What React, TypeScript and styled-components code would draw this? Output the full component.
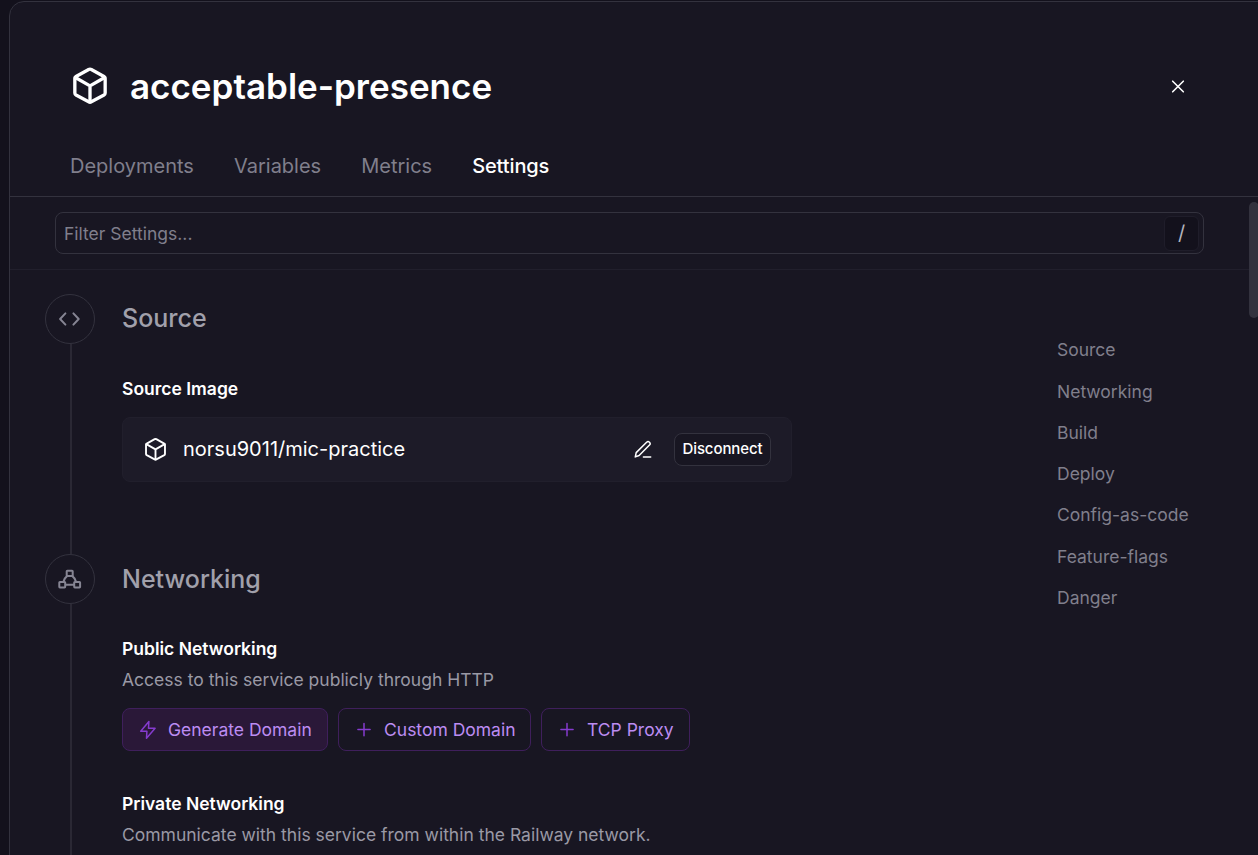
import React from "react";
import styled, { createGlobalStyle } from "styled-components";

const GlobalStyle = createGlobalStyle`
  * { box-sizing: border-box; }
  html, body { margin: 0; background: #13111c; overflow: hidden; }
  body { font-family: Inter, "Liberation Sans", sans-serif; }
  h1, h2, h3, p { margin: 0; }
  button, input { font-family: inherit; }
  svg { display: block; flex: none; }
`;

const Screen = styled.div`
  height: 855px;
  padding: 1px 0 0 9px;
  overflow: hidden;
`;

const Panel = styled.main`
  display: flex;
  flex-direction: column;
  width: 1270px;
  height: 880px;
  background: #181622;
  border: 1px solid #33323e;
  border-radius: 15px;
`;

const Header = styled.header`
  flex: none;
  width: 1248px;
  height: 195px;
  padding: 59px 60px 0;
  border-bottom: 1px solid #33323e;
`;

const TitleRow = styled.div`
  display: flex;
  align-items: center;
  height: 50px;
  padding-right: 13px;
  color: #fff;
`;

const Title = styled.h1`
  flex: 1;
  margin-left: 20px;
  font-size: 35px;
  font-weight: 600;
  line-height: 50px;
`;

const CloseButton = styled.button`
  display: grid;
  place-items: center;
  width: 14px;
  height: 14px;
  padding: 0;
  border: 0;
  background: none;
  color: #fff;
`;

const Tabs = styled.nav`
  display: flex;
  gap: 40px;
  margin-top: 40px;
`;

const Tab = styled.a<{ $active?: boolean }>`
  color: ${(p) => (p.$active ? "#fff" : "#807f8c")};
  font-size: 20px;
  font-weight: ${(p) => (p.$active ? 500 : 400)};
  letter-spacing: ${(p) => (p.$active ? "-0.1px" : "0")};
  line-height: 30px;
  white-space: nowrap;
`;

const FilterBar = styled.div`
  width: 1239px;
  height: 73px;
  padding: 15px 45px 0;
  border-bottom: 1px solid #211f2c;
`;

const FilterField = styled.label`
  display: flex;
  align-items: center;
  height: 42px;
  padding: 0 4px 0 8px;
  border: 1px solid #33323e;
  border-radius: 8px;
`;

const FilterInput = styled.input`
  flex: 1;
  padding: 0;
  border: 0;
  outline: 0;
  background: none;
  color: #fff;
  font-size: 17.5px;
  &::placeholder { color: #807f8c; opacity: 1; }
`;

const Key = styled.kbd`
  display: grid;
  place-items: center;
  width: 35px;
  height: 35px;
  border: 1px solid #1f1d2a;
  border-radius: 6px;
  background: #13111c;
  color: #b4b3bd;
  font-family: inherit;
  font-size: 20px;
`;

const Viewport = styled.div`
  position: relative;
  flex: 1;
`;

const ScrollThumb = styled.div`
  position: absolute;
  top: 5px;
  left: 1239px;
  width: 10px;
  height: 116px;
  border-radius: 5px;
  background: #33323e;
`;

const Content = styled.div`
  display: flex;
  padding: 24px 0 0 35px;
`;

const Sections = styled.div`
  width: 1012px;
`;

const Section = styled.section<{ $height: number }>`
  display: flex;
  gap: 27px;
  height: ${(p) => p.$height}px;
`;

const Rail = styled.div`
  display: flex;
  flex-direction: column;
  align-items: center;
  width: 50px;
`;

const RailIcon = styled.div`
  display: grid;
  place-items: center;
  flex: none;
  width: 50px;
  height: 50px;
  border: 1px solid #33323e;
  border-radius: 50%;
  color: #868593;
`;

const RailLine = styled.div`
  flex: 1;
  width: 2px;
  margin-left: 2px;
  background: #2a2834;
`;

const SectionBody = styled.div`
  width: 670px;
`;

const SectionTitle = styled.h2<{ $height?: number }>`
  height: 50px;
  color: #a1a0ab;
  font-size: 25px;
  font-weight: 500;
  line-height: ${(p) => p.$height ?? 50}px;
`;

const Group = styled.div<{ $top: number }>`
  margin-top: ${(p) => p.$top}px;
`;

const GroupTitle = styled.h3`
  color: #fff;
  font-size: 17.5px;
  font-weight: 600;
  line-height: 30px;
`;

const GroupText = styled.p`
  color: #9a99a5;
  font-size: 17.5px;
  line-height: 30px;
  margin-top: 1px;
  white-space: nowrap;
`;

const SourceCard = styled.div`
  display: flex;
  align-items: center;
  height: 65px;
  margin-top: 13px;
  padding: 0 20px;
  border: 1px solid #211f2c;
  border-radius: 8px;
  background: #1d1b28;
  color: #fff;
`;

const SourceName = styled.span`
  flex: 1;
  margin-left: 15px;
  padding-bottom: 2px;
  font-size: 20px;
  line-height: 30px;
`;

const SmallButton = styled.button`
  width: 97px;
  height: 33px;
  margin-left: 21px;
  padding: 0 0 2px;
  border: 1px solid #33323e;
  border-radius: 8px;
  background: #181622;
  color: #fff;
  font-size: 15px;
  font-weight: 500;
  letter-spacing: -0.1px;
  white-space: nowrap;
`;

const Actions = styled.div`
  display: flex;
  gap: 10px;
  margin-top: 13px;
`;

const ActionButton = styled.button<{ $width: number; $filled?: boolean }>`
  display: flex;
  align-items: center;
  gap: 10px;
  width: ${(p) => p.$width}px;
  height: 43px;
  padding: 0 0 0 15px;
  border: 1px solid #3f1f5c;
  border-radius: 8px;
  background: ${(p) => (p.$filled ? "#2a1838" : "transparent")};
  color: #bc8cf2;
  font-size: 17.5px;
  white-space: nowrap;
  svg { color: #853bce; }
`;

const Outline = styled.nav`
  display: flex;
  flex-direction: column;
  gap: 11.3px;
  padding-top: 41.3px;
`;

const OutlineLink = styled.a`
  color: #807f8c;
  font-size: 17.5px;
  line-height: 30px;
  white-space: nowrap;
`;

const Svg = ({ size, stroke, children }: { size: number; stroke: number; children: React.ReactNode }) => (
  <svg width={size} height={size} viewBox="0 0 24 24" fill="none" stroke="currentColor"
    strokeWidth={stroke} strokeLinecap="round" strokeLinejoin="round">
    {children}
  </svg>
);

const Cube = ({ size, stroke }: { size: number; stroke: number }) => (
  <Svg size={size} stroke={stroke}>
    <path d="M11.2 2.1 Q12 1.7 12.8 2.1 L20.4 6.3 Q21.1 6.7 21.1 7.5 V16.2 Q21.1 17 20.4 17.4 L12.8 21.5 Q12 21.9 11.2 21.5 L3.6 17.4 Q2.9 17 2.9 16.2 V7.5 Q2.9 6.7 3.6 6.3 Z" />
    <path d="M3.2 6.9 L12 11.9 L20.8 6.9 M12 11.9 V21.6" />
  </Svg>
);

const Close = () => (
  <svg width="14" height="14" viewBox="0 0 14 14" stroke="currentColor" strokeWidth="1.6" strokeLinecap="round">
    <path d="M1.7 2.2 L12.3 12.8 M12.3 2.2 L1.7 12.8" />
  </svg>
);

const Code = () => (
  <svg width="24" height="24" viewBox="0 0 24 24" fill="none" stroke="currentColor" strokeWidth="2"
    strokeLinecap="round" strokeLinejoin="round">
    <path d="M7.4 6.4 L2.1 12 L7.4 17.6 M15.4 6.4 L20.7 12 L15.4 17.6" />
  </svg>
);

const Network = () => (
  <svg width="24" height="24" viewBox="0 0 24 24" fill="none" stroke="currentColor" strokeWidth="2" strokeLinejoin="round">
    <rect x="8.7" y="3.7" width="6" height="5.4" rx=".6" />
    <rect x="1.3" y="14.9" width="5.9" height="5.5" rx=".6" />
    <rect x="16.2" y="14.9" width="5.9" height="5.5" rx=".6" />
    <path d="M9 9.1 Q6.2 11.3 5.3 14.9 M14.4 9.1 Q17.2 11.3 18.1 14.9 M7.2 17.8 H16.2" />
  </svg>
);

const Pencil = () => (
  <svg width="20" height="20" viewBox="0 0 20 20" fill="none" stroke="currentColor" strokeWidth="1.5"
    strokeLinecap="round" strokeLinejoin="round">
    <path d="M2.3 16.9 L3.2 12.6 L13.6 2.3 A1.95 1.95 0 0 1 16.5 5.1 L6.1 15.5 Z M10.4 17 H17.7" />
  </svg>
);

const Bolt = () => (
  <svg width="20" height="20" viewBox="0 0 20 20" fill="none" stroke="currentColor" strokeWidth="1.5"
    strokeLinecap="round" strokeLinejoin="round">
    <path d="M10.9 1.4 L2.7 11.2 H8.9 L8.5 18.2 L17.1 8.2 H10.5 Z" />
  </svg>
);

const Plus = () => (
  <svg width="20" height="20" viewBox="0 0 20 20" stroke="currentColor" strokeWidth="1.5" strokeLinecap="round">
    <path d="M3.9 9.6 H16.1 M10 3.5 V15.7" />
  </svg>
);

const tabs = ["Deployments", "Variables", "Metrics", "Settings"];
const outline = ["Source", "Networking", "Build", "Deploy", "Config-as-code", "Feature-flags", "Danger"];

export default function App() {
  return (
    <Screen>
      <GlobalStyle />
      <Panel>
        <Header>
          <TitleRow>
            <Cube size={40} stroke={2} />
            <Title>acceptable-presence</Title>
            <CloseButton aria-label="Close"><Close /></CloseButton>
          </TitleRow>
          <Tabs>
            {tabs.map((t) => <Tab key={t} $active={t === "Settings"}>{t}</Tab>)}
          </Tabs>
        </Header>
        <Viewport>
          <FilterBar>
            <FilterField>
              <FilterInput placeholder="Filter Settings..." />
              <Key>/</Key>
            </FilterField>
          </FilterBar>
          <Content>
            <Sections>
              <Section $height={260}>
                <Rail><RailIcon><Code /></RailIcon><RailLine /></Rail>
                <SectionBody>
                  <SectionTitle $height={48}>Source</SectionTitle>
                  <Group $top={30}>
                    <GroupTitle>Source Image</GroupTitle>
                    <SourceCard>
                      <Cube size={25} stroke={1.8} />
                      <SourceName>norsu9011/mic-practice</SourceName>
                      <Pencil />
                      <SmallButton>Disconnect</SmallButton>
                    </SourceCard>
                  </Group>
                </SectionBody>
              </Section>
              <Section $height={340}>
                <Rail><RailIcon><Network /></RailIcon><RailLine /></Rail>
                <SectionBody>
                  <SectionTitle>Networking</SectionTitle>
                  <Group $top={30}>
                    <GroupTitle>Public Networking</GroupTitle>
                    <GroupText>Access to this service publicly through HTTP</GroupText>
                    <Actions>
                      <ActionButton $width={206} $filled><Bolt />Generate Domain</ActionButton>
                      <ActionButton $width={193}><Plus />Custom Domain</ActionButton>
                      <ActionButton $width={149}><Plus />TCP Proxy</ActionButton>
                    </Actions>
                  </Group>
                  <Group $top={38}>
                    <GroupTitle>Private Networking</GroupTitle>
                    <GroupText>Communicate with this service from within the Railway network.</GroupText>
                  </Group>
                </SectionBody>
              </Section>
            </Sections>
            <Outline>
              {outline.map((o) => <OutlineLink key={o}>{o}</OutlineLink>)}
            </Outline>
          </Content>
          <ScrollThumb />
        </Viewport>
      </Panel>
    </Screen>
  );
}
